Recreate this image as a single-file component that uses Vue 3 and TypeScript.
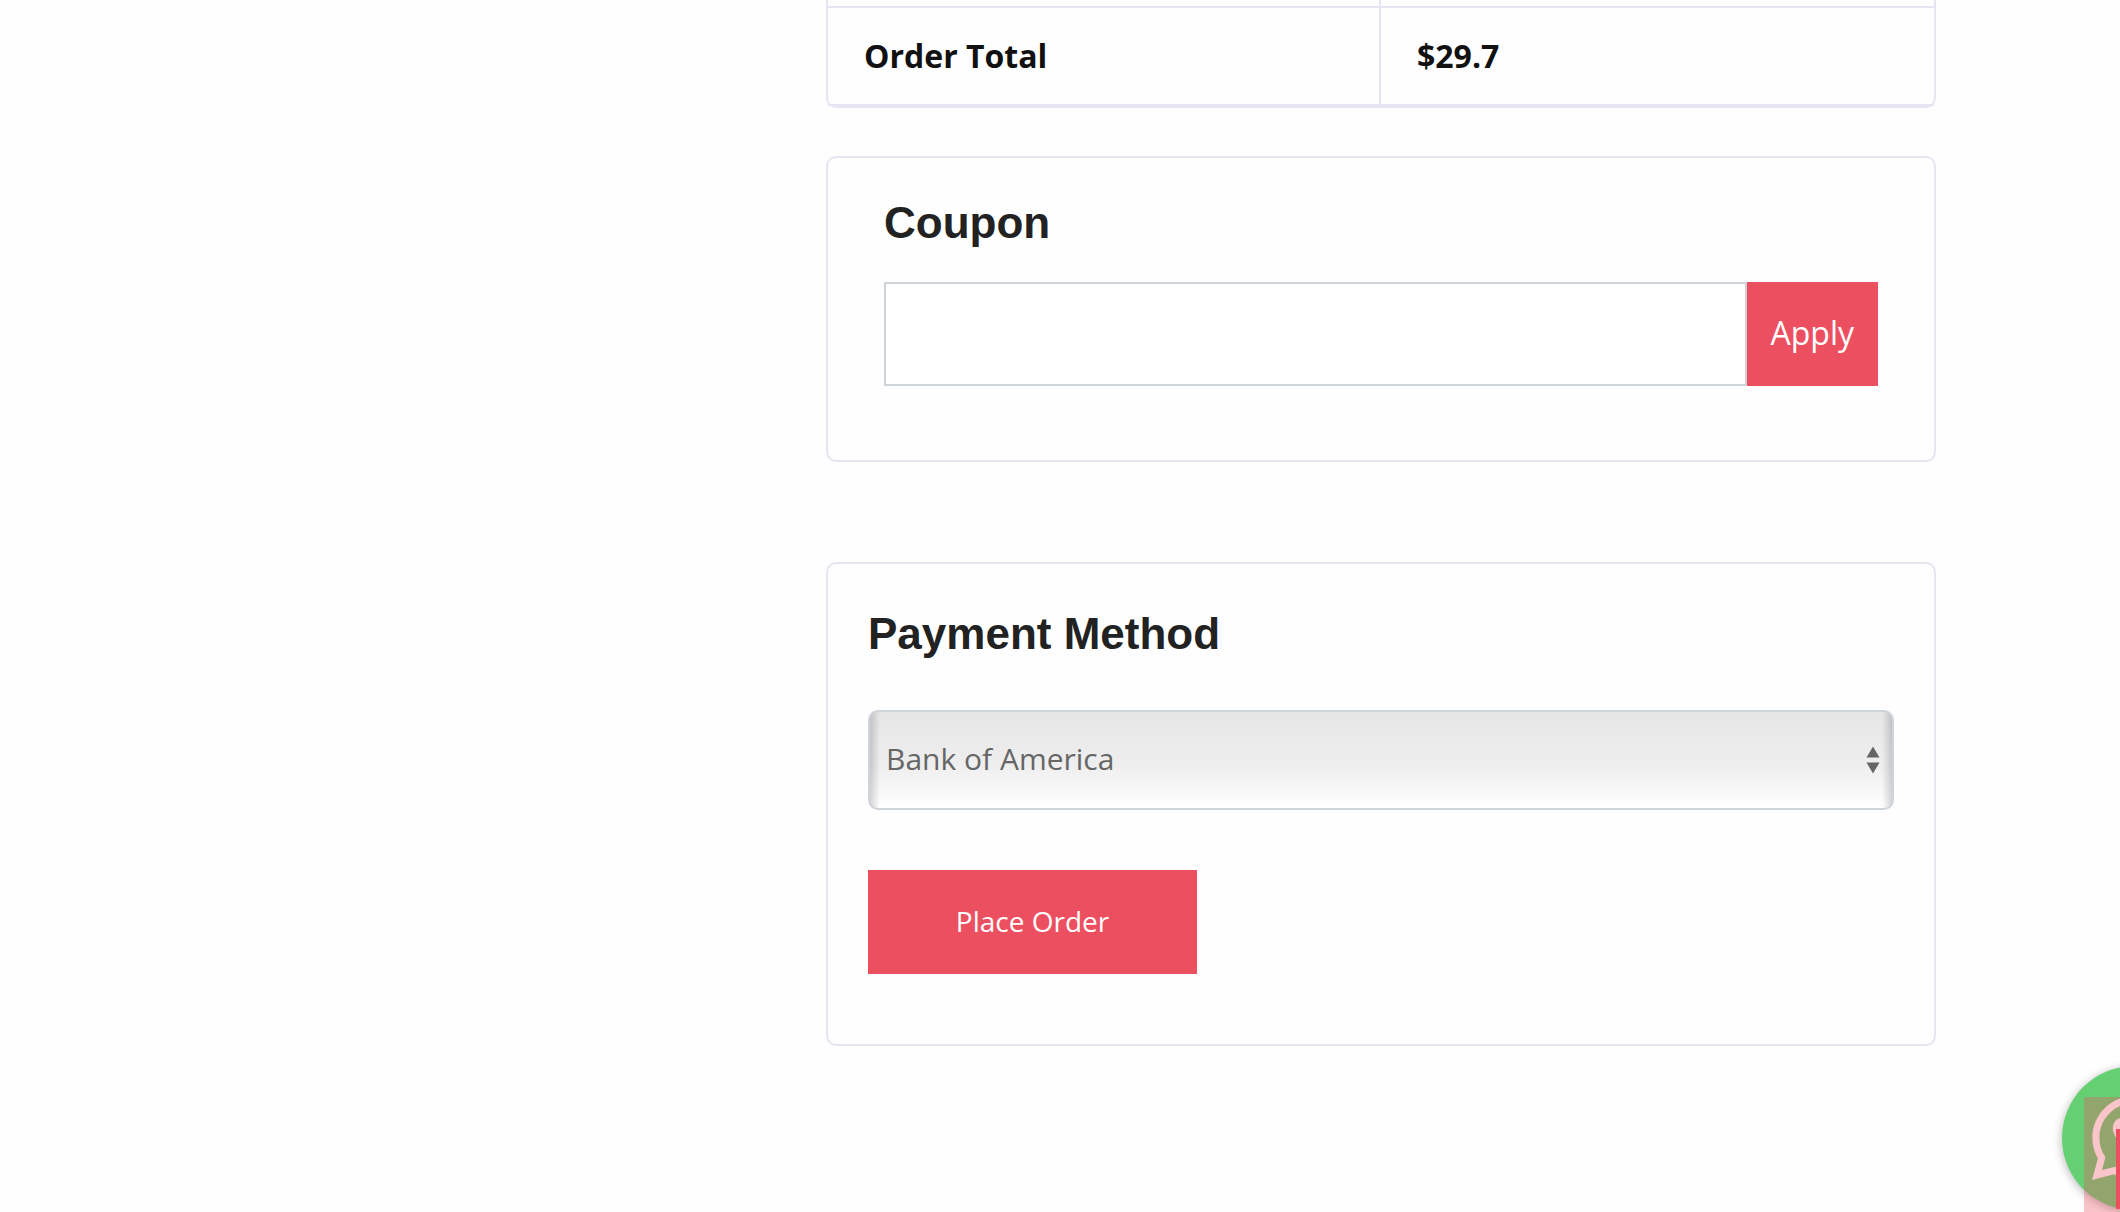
<script setup lang="ts">
import { ref } from 'vue'

const total = ref('$29.7')
const coupon = ref('')
const method = ref('Bank of America')
const methods: string[] = ['Bank of America']
</script>

<template>
  <main class="page">
    <div class="summary">
      <section class="totals" aria-label="Order summary">
        <table>
          <tbody>
            <tr class="clipped">
              <td></td>
              <td></td>
            </tr>
            <tr>
              <th scope="row">Order Total</th>
              <td>{{ total }}</td>
            </tr>
          </tbody>
        </table>
      </section>

      <section class="card coupon">
        <h3><label for="coupon">Coupon</label></h3>
        <form class="coupon-form" @submit.prevent>
          <input id="coupon" v-model="coupon" type="text" />
          <button type="submit">Apply</button>
        </form>
      </section>

      <section class="card payment">
        <h3><label for="method">Payment Method</label></h3>
        <div class="select-wrap">
          <select id="method" v-model="method">
            <option v-for="m in methods" :key="m">{{ m }}</option>
          </select>
          <svg class="arrows" viewBox="0 0 14 28" aria-hidden="true">
            <path d="M7 0.5L13.5 11.5H0.5ZM7 27.5L13.5 16.5H0.5Z" />
          </svg>
        </div>
        <button class="place" type="button">Place Order</button>
      </section>
    </div>

    <div class="floating">
      <a class="whatsapp" href="#" aria-label="WhatsApp">
        <svg viewBox="0 32 448 448" aria-hidden="true">
          <path
            d="M380.9 97.1C339 55.1 283.2 32 223.9 32c-122.4 0-222 99.6-222 222 0 39.1 10.2 77.3 29.6 111L0 480l117.7-30.9c32.4 17.7 68.9 27 106.1 27h.1c122.3 0 224.1-99.6 224.1-222 0-59.3-25.2-115-67.1-157zm-157 341.6c-33.2 0-65.7-8.9-94-25.7l-6.7-4-69.8 18.3L72 359.2l-4.4-7c-18.5-29.4-28.2-63.3-28.2-98.2 0-101.7 82.8-184.5 184.6-184.5 49.3 0 95.6 19.2 130.4 54.1 34.8 34.9 56.2 81.2 56.1 130.5 0 101.8-84.9 184.6-186.6 184.6zm101.2-138.2c-5.5-2.8-32.8-16.2-37.9-18-5.1-1.9-8.8-2.8-12.5 2.8-3.7 5.6-14.3 18-17.6 21.8-3.2 3.7-6.5 4.2-12 1.4-32.6-16.3-54-29.1-75.5-66-5.7-9.8 5.7-9.1 16.3-30.3 1.8-3.7.9-6.9-.5-9.7-1.4-2.8-12.5-30.1-17.1-41.2-4.5-10.8-9.1-9.3-12.5-9.5-3.2-.2-6.9-.2-10.6-.2-3.7 0-9.7 1.4-14.8 6.9-5.1 5.6-19.4 19-19.4 46.3 0 27.3 19.9 53.7 22.6 57.4 2.8 3.7 39.1 59.7 94.8 83.8 35.2 15.2 49 16.5 66.6 13.9 10.7-1.6 32.8-13.4 37.4-26.4 4.6-13 4.6-24.1 3.2-26.4-1.3-2.5-5-3.9-10.5-6.6z"
          />
        </svg>
      </a>
      <div class="veil"></div>
      <div class="scroll-top"></div>
    </div>
  </main>
</template>

<style>
body {
  margin: 0;
  background: #fefefe;
}
</style>

<style scoped>
* {
  box-sizing: border-box;
}
.page {
  display: grid;
  grid-template-columns: 642fr 1110fr;
  padding: 0 184px 48px;
  font-family: 'Open Sans', 'Noto Sans', sans-serif;
  font-size: 32px;
  line-height: 48px;
  color: #222;
}
.summary {
  grid-column: 2;
  min-width: 0;
}
.totals {
  border: 2px solid #e6e6f2;
  border-top: 0;
  border-radius: 0 0 10px 10px;
  margin-bottom: 48px;
}
table {
  width: 100%;
  table-layout: fixed;
  border-collapse: separate;
  border-spacing: 0;
}
th,
td {
  padding: 24px 36px;
  border-bottom: 2px solid #e6e6f2;
  text-align: left;
  font-weight: 700;
  color: #111;
}
tr > :first-child {
  border-right: 2px solid #e6e6f2;
}
.clipped td {
  height: 8px;
  padding: 0;
}
.card {
  border: 2px solid #e6e6f2;
  border-radius: 10px;
}
.coupon {
  padding: 39px 56px 74px;
  margin-bottom: 100px;
}
.payment {
  padding: 44px 40px 70px;
}
h3 {
  margin: 0;
  font: 700 44px/52px 'Liberation Sans', Arial, sans-serif;
}
.coupon h3 {
  margin-bottom: 33px;
}
.payment h3 {
  margin-bottom: 50px;
}
.coupon-form {
  display: flex;
}
input {
  flex: 1;
  min-width: 0;
  height: 104px;
  padding: 0 24px;
  border: 2px solid #ced4da;
  border-radius: 0;
  background: #fff;
  font: inherit;
  outline: 0;
}
button {
  height: 104px;
  padding: 0 24px 2px;
  border: 0;
  background: #ec5060;
  color: #fff;
  font: inherit;
}
.select-wrap {
  position: relative;
  margin-bottom: 60px;
}
select {
  display: block;
  width: 100%;
  height: 100px;
  padding: 0 16px 2px;
  border: 2px solid #ced4da;
  border-radius: 10px;
  appearance: none;
  background:
    linear-gradient(90deg, rgba(0, 0, 0, 0.16), transparent) left / 10px 100% no-repeat,
    linear-gradient(270deg, rgba(0, 0, 0, 0.16), transparent) right / 10px 100% no-repeat,
    linear-gradient(#e6e6e6, #eeeeee 55%, #fff);
  color: #666;
  font: inherit;
  font-size: 30px;
}
.arrows {
  position: absolute;
  right: 14px;
  top: 36px;
  width: 14px;
  height: 28px;
  fill: #666;
  pointer-events: none;
}
.place {
  display: block;
  width: 329px;
  font-size: 28px;
}
.floating {
  position: fixed;
  right: 0;
  bottom: 0;
  width: 72px;
  height: 162px;
  overflow: hidden;
}
.whatsapp {
  position: absolute;
  left: 14px;
  top: 16px;
  display: grid;
  place-items: center;
  width: 144px;
  height: 144px;
  border-radius: 50%;
  background: #65d072;
  box-shadow: 0 2px 10px rgba(0, 0, 0, 0.3);
}
.whatsapp svg {
  width: 84px;
  height: 84px;
  fill: #fff;
}
.veil {
  position: absolute;
  inset: 47px 0 0 36px;
  background: rgba(236, 80, 96, 0.33);
}
.scroll-top {
  position: absolute;
  left: 68px;
  top: 79px;
  width: 80px;
  height: 80px;
  background: #ec5060;
}
</style>
